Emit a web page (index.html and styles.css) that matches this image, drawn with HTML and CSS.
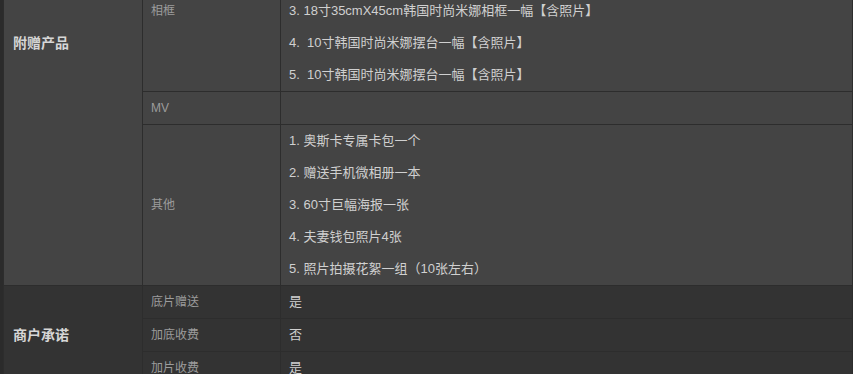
FILE: index.html
```html
<!DOCTYPE html>
<html lang="zh-CN">
<head>
<meta charset="utf-8">
<title>套餐详情</title>
<link rel="stylesheet" href="styles.css">
</head>
<body>
<table class="sheet">
  <tbody class="group group-gift">
    <tr>
      <td class="head head-top" rowspan="3"><span>附赠产品</span></td>
      <td class="sub sub-top">相框</td>
      <td class="val">
        <div class="line">3. 18寸35cmX45cm韩国时尚米娜相框一幅【含照片】</div>
        <div class="line">4.&nbsp; 10寸韩国时尚米娜摆台一幅【含照片】</div>
        <div class="line">5.&nbsp; 10寸韩国时尚米娜摆台一幅【含照片】</div>
      </td>
    </tr>
    <tr>
      <td class="sub">MV</td>
      <td class="val"></td>
    </tr>
    <tr>
      <td class="sub">其他</td>
      <td class="val">
        <div class="line">1. 奥斯卡专属卡包一个</div>
        <div class="line">2. 赠送手机微相册一本</div>
        <div class="line">3. 60寸巨幅海报一张</div>
        <div class="line">4. 夫妻钱包照片4张</div>
        <div class="line">5. 照片拍摄花絮一组（10张左右）</div>
      </td>
    </tr>
  </tbody>
  <tbody class="group group-promise">
    <tr>
      <td class="head" rowspan="3">商户承诺</td>
      <td class="sub">底片赠送</td>
      <td class="val">是</td>
    </tr>
    <tr>
      <td class="sub">加底收费</td>
      <td class="val">否</td>
    </tr>
    <tr>
      <td class="sub">加片收费</td>
      <td class="val">是</td>
    </tr>
  </tbody>
</table>
</body>
</html>
```
FILE: styles.css
```css
html, body {
  margin: 0;
  height: 100%;
  overflow: hidden;
  background: #2b2b2b;
}

body {
  font-family: "Liberation Sans", "Noto Sans CJK SC", sans-serif;
  font-size: 13px;
  color: #d0d0d0;
}

.sheet {
  margin: -5px 0 0 3px;
  width: calc(100% - 3px);
  border-collapse: separate;
  border-spacing: 0;
  table-layout: fixed;
  border-left: 1px solid #2d2d2d;
}

.sheet td {
  box-sizing: border-box;
  padding: 0 8px;
  line-height: 32px;
  border-right: 1px solid #2d2d2d;
  border-bottom: 1px solid #2d2d2d;
  vertical-align: middle;
}

.group-gift td {
  background: #444444;
}

.group-promise td {
  background: #333333;
}

.sheet .head {
  width: 139px;
  padding-left: 9px;
  font-size: 14px;
  font-weight: bold;
  color: #d6d6d6;
}

.sheet .head-top {
  vertical-align: top;
}

.head-top span {
  display: block;
  padding-top: 32px;
}

.sheet .sub {
  width: 138px;
  font-size: 12px;
  color: #9c9c9c;
}

.sheet .sub-top {
  vertical-align: top;
}

.val {
  color: #d0d0d0;
  height: 32px;
}

.line {
  line-height: 32px;
  white-space: nowrap;
}
```
